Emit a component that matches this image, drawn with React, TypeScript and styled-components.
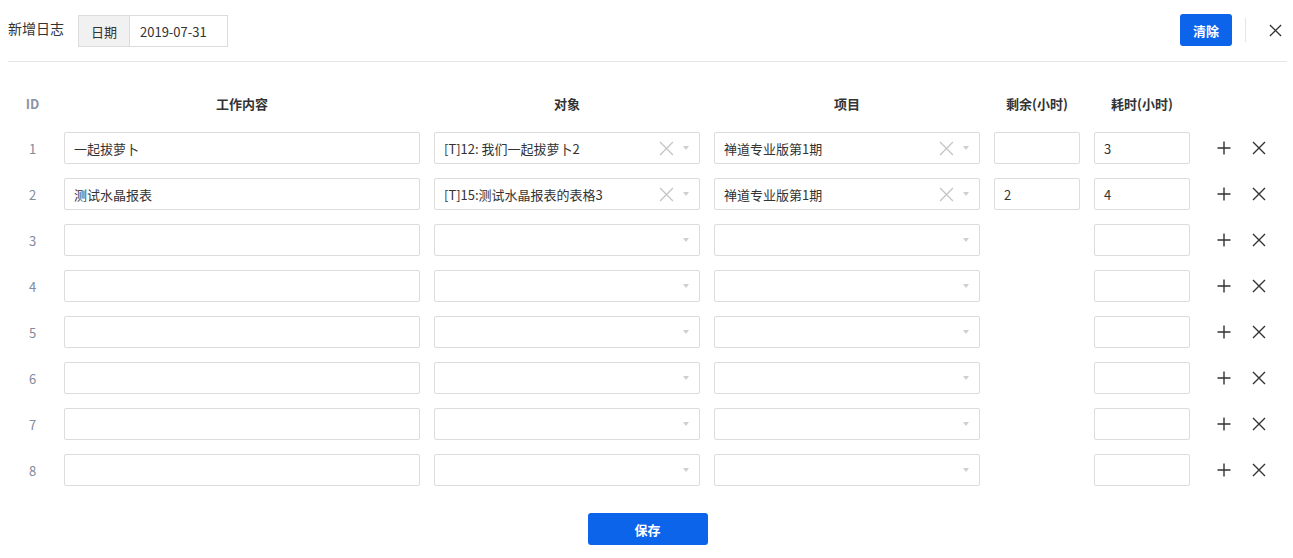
import React from 'react';
import styled, { createGlobalStyle } from 'styled-components';

const GlobalStyle = createGlobalStyle`
  body {
    margin: 0;
    background: #fff;
    font-family: "Noto Sans CJK SC", "Noto Sans", sans-serif;
    font-size: 13px;
    color: #333;
  }
`;

const StyledPage = styled.div`
  padding: 0 6px 0 8px;
`;

const StyledHeader = styled.div`
  display: flex;
  align-items: center;
  height: 32px;
  padding: 14px 0 15px;
  border-bottom: 1px solid #e5e5e5;
`;

const StyledTitle = styled.div`
  font-size: 14px;
  color: #333;
  margin-right: 14px;
  margin-top: -4px;
`;

const StyledInputGroup = styled.div`
  display: flex;
  height: 32px;
  border: 1px solid #dcdcdc;
  box-sizing: border-box;
  margin-top: 2px;
`;

const StyledAddon = styled.div`
  width: 50px;
  display: flex;
  align-items: center;
  justify-content: center;
  background: #f1f1f1;
  border-right: 1px solid #dcdcdc;
`;

const StyledDate = styled.div`
  width: 87px;
  padding-left: 10px;
  display: flex;
  align-items: center;
`;

const StyledSpacer = styled.div`
  flex: 1;
`;

const StyledPrimaryButton = styled.button<{ $wide?: boolean }>`
  width: ${(p) => (p.$wide ? '120px' : '52px')};
  height: 32px;
  border: none;
  border-radius: 3px;
  background: #0c64eb;
  color: #fff;
  font-family: inherit;
  font-size: 13px;
  font-weight: 700;
  cursor: pointer;
`;

const StyledDivider = styled.div`
  width: 1px;
  height: 24px;
  background: #e5e5e5;
  margin: 0 17px 0 13px;
`;

const StyledIconButton = styled.button<{ $size?: number }>`
  width: ${(p) => p.$size ?? 28}px;
  height: 28px;
  border: none;
  background: transparent;
  padding: 0;
  display: inline-flex;
  align-items: center;
  justify-content: center;
  color: #333;
  cursor: pointer;
`;

const StyledGrid = styled.div`
  display: grid;
  grid-template-columns: 49px 370px 280px 280px 100px 110px 1fr;
  grid-auto-rows: 46px;
  grid-template-rows: 41px;
  margin-top: 22px;
`;

const StyledHeadCell = styled.div<{ $muted?: boolean }>`
  display: flex;
  align-items: center;
  justify-content: center;
  font-weight: 700;
  margin-top: -2px;
  color: ${(p) => (p.$muted ? '#8a94a6' : '#333')};
`;

const StyledCell = styled.div`
  display: flex;
  align-items: center;
  padding: 0 7px;
`;

const StyledIdCell = styled.div`
  display: flex;
  align-items: center;
  justify-content: center;
  color: #838a9d;
`;

const StyledInput = styled.div`
  width: 100%;
  height: 32px;
  box-sizing: border-box;
  border: 1px solid #dcdcdc;
  border-radius: 2px;
  padding: 0 9px;
  display: flex;
  align-items: center;
  background: #fff;
`;

const StyledSelectText = styled.div`
  flex: 1;
  white-space: nowrap;
  overflow: hidden;
`;

const StyledClear = styled.span`
  display: inline-flex;
  margin-right: 9px;
`;

const StyledCaret = styled.span<{ $alone?: boolean }>`
  width: 0;
  height: 0;
  border-left: 3px solid transparent;
  border-right: 3px solid transparent;
  border-top: 4px solid #cfcfcf;
  margin-right: 1px;
`;

const StyledActions = styled.div`
  display: flex;
  align-items: center;
  gap: 7px;
  padding-left: 13px;
`;

const StyledFooter = styled.div`
  display: flex;
  justify-content: center;
  margin-top: 20px;
`;

const CloseIcon = ({ size = 14, color = '#333', width = 1.4 }: { size?: number; color?: string; width?: number }) => (
  <svg width={size} height={size} viewBox="0 0 14 14">
    <path d="M1 1L13 13M13 1L1 13" stroke={color} strokeWidth={width} fill="none" />
  </svg>
);

const PlusIcon = () => (
  <svg width={14} height={14} viewBox="0 0 14 14">
    <path d="M7 0.5V13.5M0.5 7H13.5" stroke="#333" strokeWidth={1.4} fill="none" />
  </svg>
);

type Row = {
  id: number;
  work: string;
  target: string;
  project: string;
  left: string | null;
  used: string;
};

const rows: Row[] = [
  { id: 1, work: '一起拔萝卜', target: '[T]12: 我们一起拔萝卜2', project: '禅道专业版第1期', left: '', used: '3' },
  { id: 2, work: '测试水晶报表', target: '[T]15:测试水晶报表的表格3', project: '禅道专业版第1期', left: '2', used: '4' },
  ...[3, 4, 5, 6, 7, 8].map((id) => ({ id, work: '', target: '', project: '', left: null, used: '' })),
];

const Select = ({ value }: { value: string }) => (
  <StyledInput>
    <StyledSelectText>{value}</StyledSelectText>
    {value && (
      <StyledClear>
        <CloseIcon size={15} color="#c4c4c4" width={1.2} />
      </StyledClear>
    )}
    <StyledCaret />
  </StyledInput>
);

const App = () => {
  return (
    <StyledPage>
      <GlobalStyle />
      <StyledHeader>
        <StyledTitle>新增日志</StyledTitle>
        <StyledInputGroup>
          <StyledAddon>日期</StyledAddon>
          <StyledDate>2019-07-31</StyledDate>
        </StyledInputGroup>
        <StyledSpacer />
        <StyledPrimaryButton>清除</StyledPrimaryButton>
        <StyledDivider />
        <StyledIconButton $size={24}>
          <CloseIcon size={13} />
        </StyledIconButton>
      </StyledHeader>

      <StyledGrid>
        <StyledHeadCell $muted>ID</StyledHeadCell>
        <StyledHeadCell>工作内容</StyledHeadCell>
        <StyledHeadCell>对象</StyledHeadCell>
        <StyledHeadCell>项目</StyledHeadCell>
        <StyledHeadCell>剩余(小时)</StyledHeadCell>
        <StyledHeadCell>耗时(小时)</StyledHeadCell>
        <StyledHeadCell />
        {rows.map((row) => (
          <React.Fragment key={row.id}>
            <StyledIdCell>{row.id}</StyledIdCell>
            <StyledCell>
              <StyledInput>{row.work}</StyledInput>
            </StyledCell>
            <StyledCell>
              <Select value={row.target} />
            </StyledCell>
            <StyledCell>
              <Select value={row.project} />
            </StyledCell>
            <StyledCell>{row.left !== null && <StyledInput>{row.left}</StyledInput>}</StyledCell>
            <StyledCell>
              <StyledInput>{row.used}</StyledInput>
            </StyledCell>
            <StyledActions>
              <StyledIconButton>
                <PlusIcon />
              </StyledIconButton>
              <StyledIconButton>
                <CloseIcon />
              </StyledIconButton>
            </StyledActions>
          </React.Fragment>
        ))}
      </StyledGrid>

      <StyledFooter>
        <StyledPrimaryButton $wide>保存</StyledPrimaryButton>
      </StyledFooter>
    </StyledPage>
  );
};

export default App;
